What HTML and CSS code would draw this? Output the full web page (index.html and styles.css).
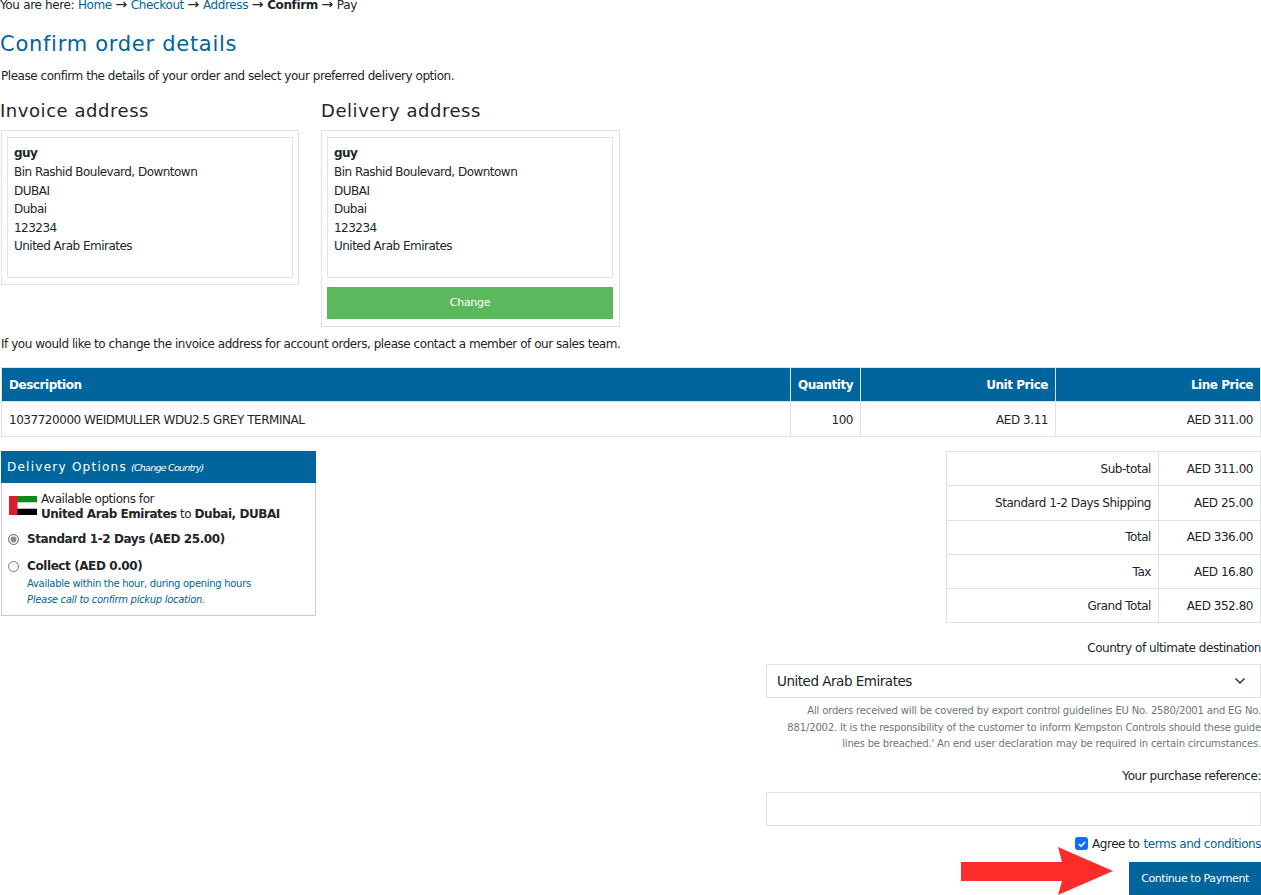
FILE: index.html
```html
<!DOCTYPE html>
<html lang="en">
<head>
<meta charset="utf-8">
<title>Confirm order details</title>
<link rel="stylesheet" href="styles.css">
</head>
<body>
<div class="page">
  <nav class="crumbs">You are here: <a href="#">Home</a> <span class="arr">→</span> <a href="#">Checkout</a> <span class="arr">→</span> <a href="#">Address</a> <span class="arr">→</span> <b>Confirm</b> <span class="arr">→</span> Pay</nav>
  <h1>Confirm order details</h1>
  <p class="intro">Please confirm the details of your order and select your preferred delivery option.</p>
  <div class="addresses">
    <section class="address">
      <h2>Invoice address</h2>
      <div class="frame">
        <div class="inner"><b>guy</b><br>Bin Rashid Boulevard, Downtown<br>DUBAI<br>Dubai<br>123234<br>United Arab Emirates</div>
      </div>
    </section>
    <section class="address address-wide">
      <h2>Delivery address</h2>
      <div class="frame">
        <div class="inner"><b>guy</b><br>Bin Rashid Boulevard, Downtown<br>DUBAI<br>Dubai<br>123234<br>United Arab Emirates</div>
        <a class="change" href="#">Change</a>
      </div>
    </section>
  </div>
  <p class="note">If you would like to change the invoice address for account orders, please contact a member of our sales team.</p>
  <table class="items">
    <thead>
      <tr><th class="c-desc">Description</th><th class="c-qty num">Quantity</th><th class="c-unit num">Unit Price</th><th class="num">Line Price</th></tr>
    </thead>
    <tbody>
      <tr><td>1037720000 WEIDMULLER WDU2.5 GREY TERMINAL</td><td class="num">100</td><td class="num">AED 3.11</td><td class="num">AED 311.00</td></tr>
    </tbody>
  </table>
  <div class="summary">
    <section class="delivery">
      <header class="del-head">Delivery Options <a href="#">(Change Country)</a></header>
      <div class="del-body">
        <div class="dest">
          <svg class="flag" viewBox="0 0 28 19" width="28" height="19" aria-hidden="true"><rect width="28" height="19" fill="#fff"/><rect y="0" width="28" height="6.3" fill="#0a8a1c"/><rect y="12.7" width="28" height="6.3" fill="#000"/><rect width="8.5" height="19" fill="#dc1c30"/></svg>
          <div>Available options for<br><b>United Arab Emirates</b> to <b>Dubai, DUBAI</b></div>
        </div>
        <label class="opt opt-first"><span class="radio on"></span><b>Standard 1-2 Days (AED 25.00)</b></label>
        <label class="opt"><span class="radio"></span><b>Collect (AED 0.00)</b></label>
        <div class="opt-note">Available within the hour, during opening hours<br><i>Please call to confirm pickup location.</i></div>
      </div>
    </section>
    <table class="totals">
      <tr><td>Sub-total</td><td class="val">AED 311.00</td></tr>
      <tr><td>Standard 1-2 Days Shipping</td><td class="val">AED 25.00</td></tr>
      <tr><td>Total</td><td class="val">AED 336.00</td></tr>
      <tr><td>Tax</td><td class="val">AED 16.80</td></tr>
      <tr><td>Grand Total</td><td class="val">AED 352.80</td></tr>
    </table>
  </div>
  <div class="checkout">
    <div class="field-label">Country of ultimate destination</div>
    <div class="select">United Arab Emirates
      <svg viewBox="0 0 12 8" width="12" height="8" aria-hidden="true"><path d="M1.5 1.5 6 6l4.5-4.5" fill="none" stroke="#333" stroke-width="1.5"/></svg>
    </div>
    <p class="legal">All orders received will be covered by export control guidelines EU No. 2580/2001 and EG No. 881/2002. It is the responsibility of the customer to inform Kempston Controls should these guide lines be breached.' An end user declaration may be required in certain circumstances.</p>
    <div class="field-label ref">Your purchase reference:</div>
    <div class="input"></div>
    <div class="agree">
      <span class="check"><svg viewBox="0 0 12 12" width="12" height="12" aria-hidden="true"><path d="M3 6.2 5.2 8.2 9 4" fill="none" stroke="#fff" stroke-width="1.6"/></svg></span>
      Agree to <a href="#">terms and conditions</a>
    </div>
    <div class="pay-row">
      <svg class="arrow" viewBox="0 0 152 48" width="152" height="48" aria-hidden="true"><path d="M0 15H101L97 0 152 24 97 48 101 34H0Z" fill="#fe2b2b"/></svg>
      <a class="pay" href="#">Continue to Payment</a>
    </div>
  </div>
</div>
</body>
</html>
```
FILE: styles.css
```css
* { box-sizing: border-box; }
html, body { margin: 0; padding: 0; background: #fff; }
body { font: 12px/18.6px "DejaVu Sans", sans-serif; color: #212529; height: 895px; overflow: hidden; letter-spacing: -0.46px; }
a { color: #00659c; text-decoration: none; }
b { font-weight: 700; }
.page { margin-top: -4px; }
.crumbs { height: 18px; line-height: 18px; letter-spacing: -0.38px; word-spacing: 0.2px; }
.arr { font-size: 14px; line-height: 14px; letter-spacing: 0; }
h1 { margin: 15px 0 0; font-size: 21px; font-weight: 400; line-height: 30px; letter-spacing: 0.72px; color: #00659c; }
.intro { margin: 8px 0 0; line-height: 18px; padding-left: 1px; }
.addresses { display: flex; gap: 22px; margin-top: 13px; padding-left: 1px; align-items: flex-start; }
.address { width: 298px; }
.address-wide { width: 299px; }
.address h2 { margin: 0 0 6px; font-size: 18px; font-weight: 400; line-height: 26px; letter-spacing: 0.55px; }
.address:first-child h2 { margin-left: -1px; }
.frame { border: 1px solid #dee2e6; padding: 6px 5px 6px 5px; }
.address-wide .frame { padding: 6px 6px 7px 5px; }
.inner { border: 1px solid #dee2e6; height: 141px; padding: 6.4px 6px 6px; letter-spacing: -0.52px; }
.change { display: block; height: 32px; margin-top: 9px; background: #5cb85c; color: #fff; text-align: center; line-height: 32px; font-size: 11px; letter-spacing: -0.3px; }
.note { margin: 8px 0 0; line-height: 18px; padding-left: 1px; }
.items { width: 1260px; margin: 14px 0 0 1px; border-collapse: collapse; table-layout: fixed; }
.items th, .items td { border: 1px solid #dee2e6; padding: 1px 7px 0; }
.items th { height: 34px; background: #00659c; color: #fff; text-align: left; font-weight: 700; }
.items td { height: 35px; padding-top: 2px; }
.items .num { text-align: right; }
.c-desc { width: 789px; }
.c-qty { width: 70px; }
.c-unit { width: 195px; }
.summary { display: flex; justify-content: space-between; align-items: flex-start; margin-top: 14px; padding-left: 1px; }
.delivery { width: 315px; border: 1px solid #ccc; border-top: 0; }
.del-head { height: 32px; margin: 0 -1px; background: #00659c; color: #fff; font-size: 12px; line-height: 33px; padding-left: 6px; letter-spacing: 1.25px; font-weight: 400; }
.del-head a { color: #fff; font-size: 9.5px; font-style: italic; letter-spacing: -0.75px; margin-left: -1px; }
.del-body { padding: 9px 7px 5px; height: 132px; }
.dest { display: flex; gap: 4px; line-height: 15px; }
.flag { margin-top: 4px; flex: none; }
.opt { display: flex; align-items: center; gap: 8px; font-size: 12px; line-height: 18px; letter-spacing: -0.41px; margin-top: 9px; }
.opt-first { margin-top: 8px; }
.radio { width: 11px; height: 11px; border: 1px solid #767676; border-radius: 50%; background: #fff; flex: none; margin-left: -1px; }
.radio.on { background: #8a8a8a; box-shadow: inset 0 0 0 1.5px #fff; }
.opt-note { margin: 1px 0 0 18px; color: #00659c; font-size: 10px; line-height: 16px; letter-spacing: -0.3px; }
.totals { width: 315px; border-collapse: collapse; }
.totals td { border: 1px solid #dee2e6; height: 34.3px; padding: 1px 7px 0; text-align: right; }
.totals .val { width: 102px; }
.checkout { width: 495px; margin: 16px 0 0 auto; text-align: right; }
.field-label { line-height: 18px; }
.select { display: flex; justify-content: space-between; align-items: center; height: 34px; margin-top: 7px; padding: 0 14px 0 10px; border: 1px solid #dee2e6; font-size: 13.5px; letter-spacing: -0.48px; text-align: left; }
.legal { margin: 5px 0 0; color: #6c757d; font-size: 10px; line-height: 16.5px; letter-spacing: -0.16px; }
.ref { margin-top: 14px; }
.input { height: 34px; margin-top: 7px; border: 1px solid #dee2e6; }
.agree { display: flex; justify-content: flex-end; align-items: center; gap: 4px; height: 18px; margin-top: 9px; }
.check { width: 13px; height: 13px; border-radius: 3px; background: #0d6efd; display: flex; align-items: center; justify-content: center; }
.pay-row { display: flex; justify-content: flex-end; align-items: flex-start; height: 40px; margin-top: 1px; position: relative; }
.pay { width: 132px; height: 33px; margin-top: 8px; background: #00659c; color: #fff; text-align: center; line-height: 33px; font-size: 11px; letter-spacing: -0.42px; }
.arrow { position: absolute; left: 195px; top: -7px; }
```
